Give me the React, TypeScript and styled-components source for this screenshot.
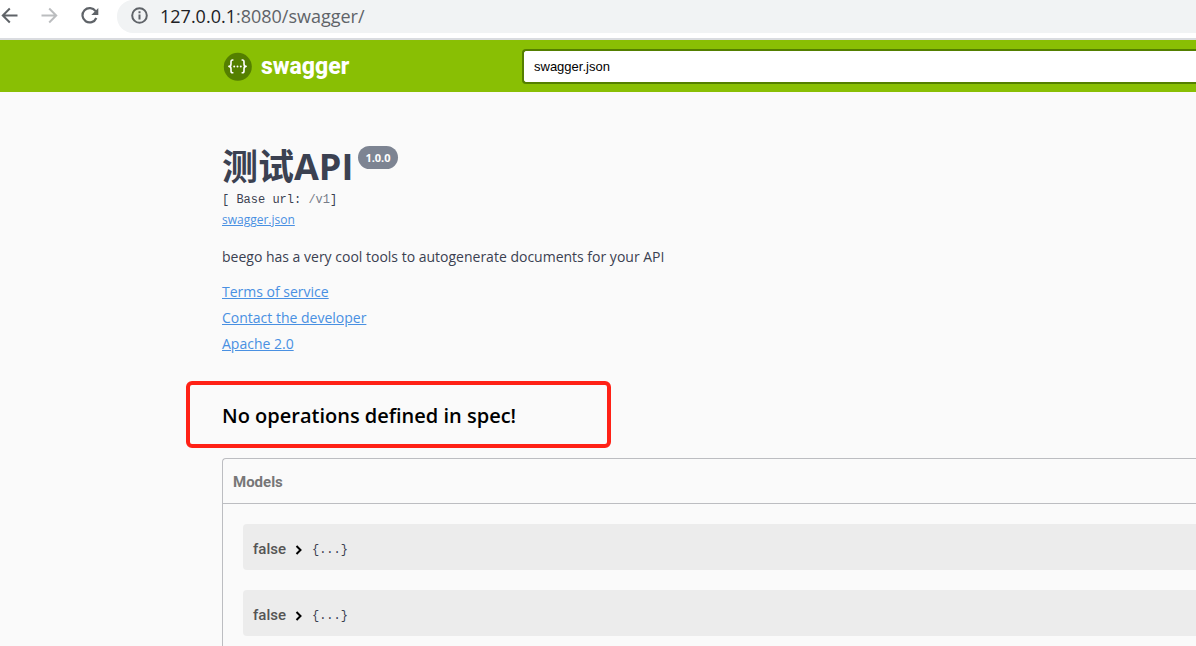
import React from "react";
import styled, { createGlobalStyle } from "styled-components";

const GlobalStyle = createGlobalStyle`
  *, *::before, *::after { box-sizing: border-box; }
  body {
    margin: 0;
    background: #fafafa;
    color: #3b4151;
    font-family: "Open Sans", "Noto Sans CJK SC", sans-serif;
    font-size: 14px;
  }
`;

const Page = styled.div`
  display: flex;
  flex-direction: column;
  min-height: 100vh;
  overflow: hidden;
`;

const BrowserBar = styled.header`
  display: flex;
  align-items: flex-start;
  height: 40px;
  background: #fff;
  border-bottom: 2px solid #dadce0;
`;

const NavButtons = styled.nav`
  display: flex;
  gap: 20px;
  width: 117px;
  padding-top: 6px;
`;

const IconButton = styled.button`
  flex: none;
  width: 20px;
  height: 20px;
  padding: 0;
  border: 0;
  background: none;
  color: #5f6368;

  &:disabled { color: #bbbdbf; }
  svg { display: block; }
`;

const AddressBox = styled.div`
  display: flex;
  flex: 1;
  align-items: center;
  gap: 12px;
  height: 33px;
  padding: 0 0 2px 14px;
  background: #f1f3f4;
  border-radius: 16px 0 0 16px;
  color: #5f6368;
`;

const Address = styled.span`
  font-family: "Open Sans", sans-serif;
  font-size: 18px;
  line-height: 24px;
`;

const Host = styled.span`
  color: #202124;
`;

const Topbar = styled.div`
  display: flex;
  align-items: center;
  height: 52px;
  padding-left: 223px;
  background: #89bf04;
`;

const Brand = styled.a`
  display: flex;
  align-items: center;
  gap: 9px;
  width: 299px;
  color: #fff;
  font-family: Roboto, sans-serif;
  font-size: 23px;
  font-weight: 800;
  line-height: 32px;
  text-decoration: none;
`;

const BrandName = styled.span`
  padding-top: 2px;
`;

const SpecInput = styled.input`
  flex: 1;
  min-width: 0;
  height: 35px;
  margin: 0;
  padding: 0 10px;
  border: 2px solid #547f00;
  border-right: 0;
  border-radius: 4px 0 0 4px;
  background: #fff;
  color: #000;
  font-family: "Liberation Sans", Arial, sans-serif;
  font-size: 13px;
  outline: none;
`;

const Content = styled.main`
  display: flex;
  flex: 1;
  flex-direction: column;
  padding: 50px 0 0 222px;
`;

const TitleRow = styled.div`
  display: flex;
  align-items: flex-start;
  gap: 5px;
`;

const Title = styled.h1`
  margin: 0;
  font-size: 36px;
  font-weight: 700;
  line-height: 50px;
`;

const Version = styled.span`
  margin-top: 4px;
  padding: 0 7px;
  border-radius: 12px;
  background: #7d8492;
  color: #fff;
  font-size: 11px;
  font-weight: 700;
  line-height: 23px;
`;

const BaseUrl = styled.pre`
  margin: 0;
  font-family: "Liberation Mono", monospace;
  font-size: 12px;
  line-height: 16px;
`;

const Path = styled.span`
  color: #777c88;
`;

const Link = styled.a<{ $small?: boolean }>`
  align-self: flex-start;
  color: #4990e2;
  font-size: ${(p) => (p.$small ? 12 : 14)}px;
  line-height: ${(p) => (p.$small ? 24 : 26)}px;
`;

const Description = styled.p`
  margin: 15px 0 12px;
  line-height: 20px;
`;

const LinkList = styled.div`
  display: flex;
  flex-direction: column;
`;

const Notice = styled.section`
  position: relative;
  padding: 45px 0 28px;
`;

const NoticeTitle = styled.h3`
  margin: 0;
  color: #000;
  font-family: "Open Sans", sans-serif;
  font-size: 20px;
  font-weight: 600;
  line-height: 28px;
`;

const Highlight = styled.div`
  position: absolute;
  top: 24px;
  left: -36px;
  width: 425px;
  height: 67px;
  border: 4px solid #ff2116;
  border-radius: 6px;
  pointer-events: none;
`;

const Models = styled.section`
  flex: 1;
  border: 1px solid #bcbdc1;
  border-width: 1px 0 0 1px;
  border-radius: 4px 0 0 0;
`;

const ModelsTitle = styled.h4`
  margin: 0;
  padding: 11px 10px 9px;
  border-bottom: 1px solid #bcbdc1;
  color: #777;
  font-family: Roboto, sans-serif;
  font-size: 15px;
  font-weight: 700;
  line-height: 24px;
`;

const ModelList = styled.div`
  display: flex;
  flex-direction: column;
  gap: 20px;
  padding: 20px 0 10px 20px;
`;

const ModelRow = styled.button`
  display: flex;
  align-items: center;
  height: 46px;
  padding: 4px 10px 0;
  border: 0;
  border-radius: 4px 0 0 4px;
  background: #ececec;
  text-align: left;
`;

const ModelName = styled.span`
  color: #555;
  font-family: Roboto, sans-serif;
  font-size: 15px;
  font-weight: 500;
  line-height: 24px;
`;

const Chevron = styled.svg`
  margin: 2px 9px 0 8px;
`;

const ModelBody = styled.code`
  margin-top: 2px;
  color: #3b4151;
  font-family: "Liberation Mono", monospace;
  font-size: 12px;
`;

const models = ["false", "false"];

function Logo() {
  return (
    <svg width="29" height="29" viewBox="0 0 29 29" fill="none" aria-hidden="true">
      <circle cx="14.8" cy="14.8" r="14" fill="#547f00" />
      <g stroke="#fff" strokeWidth="1.6" strokeLinejoin="round">
        <path d="M10.4 8H9.6Q8 8 8 9.8V12Q8 14.4 5.9 14.4Q8 14.4 8 16.8V19Q8 20.8 9.6 20.8H10.4" />
        <path d="M18.6 8H19.4Q21 8 21 9.8V12Q21 14.4 23.1 14.4Q21 14.4 21 16.8V19Q21 20.8 19.4 20.8H18.6" />
      </g>
      <g fill="#fff">
        <circle cx="11.2" cy="14.4" r="1" />
        <circle cx="14.5" cy="14.4" r="1" />
        <circle cx="17.8" cy="14.4" r="1" />
      </g>
    </svg>
  );
}

export default function App() {
  return (
    <>
      <GlobalStyle />
      <Page>
        <BrowserBar>
          <NavButtons aria-label="Browser">
            <IconButton aria-label="Back">
              <svg width="20" height="20" viewBox="0 0 20 20" fill="none" stroke="currentColor" strokeWidth="2">
                <path d="M17.5 9.5H3M9.8 2.5L2.8 9.5L9.8 16.5" />
              </svg>
            </IconButton>
            <IconButton aria-label="Forward" disabled>
              <svg width="20" height="20" viewBox="0 0 20 20" fill="none" stroke="currentColor" strokeWidth="2">
                <path d="M1.5 9.5H16M9.2 2.5L16.2 9.5L9.2 16.5" />
              </svg>
            </IconButton>
            <IconButton aria-label="Reload">
              <svg width="20" height="20" viewBox="0 0 20 20" fill="none">
                <path d="M15.6 5.2A7.2 7.2 0 1 0 16.3 12" stroke="currentColor" strokeWidth="2.2" />
                <path d="M18.3 2V9H11.3Z" fill="currentColor" />
              </svg>
            </IconButton>
          </NavButtons>
          <AddressBox>
            <svg width="17" height="17" viewBox="0 0 17 17" fill="none" stroke="currentColor" strokeWidth="2" aria-hidden="true">
              <circle cx="8.5" cy="8.5" r="7.3" />
              <path d="M8.5 7.5V12.5M8.5 4.3V6.2" />
            </svg>
            <Address>
              <Host>127.0.0.1</Host>:8080/swagger/
            </Address>
          </AddressBox>
        </BrowserBar>
        <Topbar>
          <Brand href="#">
            <Logo />
            <BrandName>swagger</BrandName>
          </Brand>
          <SpecInput type="text" aria-label="Specification URL" defaultValue="swagger.json" />
        </Topbar>
        <Content>
          <TitleRow>
            <Title>测试API</Title>
            <Version>1.0.0</Version>
          </TitleRow>
          <BaseUrl>
            [ Base url: <Path>/v1</Path>]
          </BaseUrl>
          <Link $small href="#">swagger.json</Link>
          <Description>beego has a very cool tools to autogenerate documents for your API</Description>
          <LinkList>
            <Link href="#">Terms of service</Link>
            <Link href="#">Contact the developer</Link>
            <Link href="#">Apache 2.0</Link>
          </LinkList>
          <Notice>
            <NoticeTitle>No operations defined in spec!</NoticeTitle>
            <Highlight />
          </Notice>
          <Models>
            <ModelsTitle>Models</ModelsTitle>
            <ModelList>
              {models.map((name, i) => (
                <ModelRow key={i} type="button">
                  <ModelName>{name}</ModelName>
                  <Chevron width="9" height="10" viewBox="0 0 9 10" fill="none" stroke="#000" strokeWidth="2">
                    <path d="M2.5 1L6.5 5L2.5 9" />
                  </Chevron>
                  <ModelBody>{"{...}"}</ModelBody>
                </ModelRow>
              ))}
            </ModelList>
          </Models>
        </Content>
      </Page>
    </>
  );
}
